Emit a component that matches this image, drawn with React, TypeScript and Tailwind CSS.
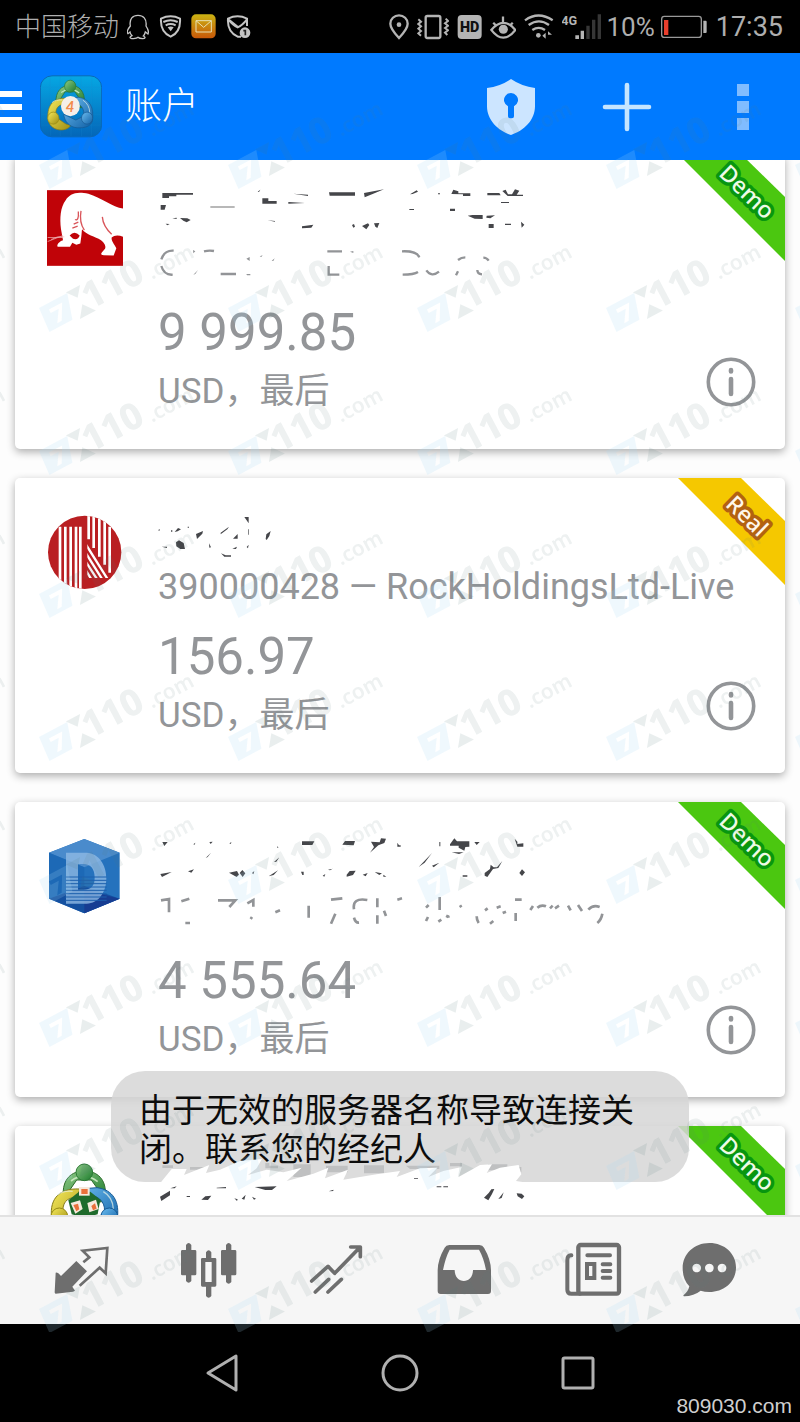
import React from "react";

type Kind = "Demo" | "Real";

function FourPeople({ four }: { four?: boolean }) {
  return (
    <g strokeWidth="3">
      <defs>
        <linearGradient id="mtGreen" x1="0" y1="0" x2="1" y2="1">
          <stop offset="0" stopColor="#8fca86" />
          <stop offset="1" stopColor="#1b7a2c" />
        </linearGradient>
        <linearGradient id="mtYellow" x1="0" y1="0" x2="1" y2="1">
          <stop offset="0" stopColor="#f6ea5c" />
          <stop offset="1" stopColor="#9d8c10" />
        </linearGradient>
        <linearGradient id="mtBlue" x1="0" y1="0" x2="1" y2="1">
          <stop offset="0" stopColor="#6dbdf0" />
          <stop offset="1" stopColor="#0f5fa5" />
        </linearGradient>
      </defs>
      <path d="M190 375C186 325 214 300 253 300s67 25 63 75c-4 20-18 22-28 12l6-32-20-28h-44l-22 32Z" fill="url(#mtGreen)" stroke="#2c6b2a" />
      <path d="M213 330Q253 300 293 332" fill="none" stroke="#c5e6bd" strokeWidth="5" />
      <path d="M156 448C146 392 170 350 240 354l-10 26c-30-2-46 16-40 52l34 22c14 10 24 12 36 6-18 36-90 34-104-12Z" fill="url(#mtYellow)" stroke="#857a1b" />
      <path d="M351 448c10-56-12-92-60-98l-26 2 0 20c38 2 54 30 47 56l-34 16-54-24c4 30 26 54 60 56 34 2 60-6 67-28Z" fill="url(#mtBlue)" stroke="#165993" />
      <path d="M172 372Q188 358 218 361M310 362q28 16 30 52" fill="none" stroke="#e8f3e8" strokeWidth="4" opacity=".7" />
      <circle cx="253" cy="304" r="25" fill="url(#mtGreen)" stroke="#2c7a35" />
      <circle cx="178" cy="436" r="25" fill="url(#mtYellow)" stroke="#968913" />
      <circle cx="328" cy="436" r="25" fill="url(#mtBlue)" stroke="#165993" />
      {four ? (
        <>
          <circle cx="254" cy="386" r="42" fill="#f5efe9" stroke="none" />
          <text x="252" y="410" textAnchor="middle" fontFamily="Lato, sans-serif" fontStyle="italic" fontWeight="700" fontSize="66" fill="#f28a4c">4</text>
        </>
      ) : (
        <>
          <path d="M205 388l32-26h34l30 24-8 44-40 10-38-10Z" fill="#1f6b2c" stroke="none" />
          <rect x="237" y="348" width="32" height="26" fill="#f6e9dc" stroke="none" />
          <path d="M212 396l28-8 8 26-22 14ZM262 396l26-10 8 28-28 10Z" fill="#f6e9dc" stroke="none" />
          <path d="M244 354h19v15h-19ZM220 402l14-4 4 17-9 6ZM274 405l11-8 5 16-11 5Z" fill="#e9703b" stroke="none" />
        </>
      )}
    </g>
  );
}

function AppIcon() {
  return (
    <svg className="h-[63px] w-[62px] shrink-0" viewBox="118 226 190 190" role="img" aria-label="MetaTrader 4">
      <defs>
        <linearGradient id="tile" x1="0" y1="0" x2="0" y2="1">
          <stop offset="0" stopColor="#06a7e3" />
          <stop offset="1" stopColor="#0466b8" />
        </linearGradient>
      </defs>
      <rect x="119" y="227" width="188" height="187" rx="36" fill="url(#tile)" stroke="#0a67b5" strokeWidth="3" />
      <path d="M150 232v178M180 230v182M213 230v182M245 230v182M276 232v178M122 262h182M122 295h182M122 345h182M122 378h182" stroke="#1f8fd5" strokeWidth="1" opacity=".5" />
      <g transform="translate(36 34) scale(.69 .74)">
        <FourPeople four />
      </g>
    </svg>
  );
}

function BearLogo() {
  return (
    <svg className="h-full w-full" viewBox="138 88 228 227">
      <rect x="138" y="88" width="228" height="227" fill="#c00308" />
      <path d="M366 143C335 140 300 110 262 99C225 90 205 100 194 118C178 140 176 170 180 205L186 238C174 242 166 252 170 258L207 258L214 246L226 252L238 248L241 226L243 205C256 222 282 226 300 238C310 246 316 256 312 264L303 274C298 280 302 283 308 283L338 284L346 262C340 250 330 240 332 230C340 222 354 222 366 228Z" fill="#fff" />
      <path d="M206 224q14-16 30 0-4 14-20 10Z" fill="#c00308" />
      <path d="M240 150q-6 34 10 58M232 152q2 30-10 24M304 168q2 28 28 52M218 190l14-6M214 202l16-6" fill="none" stroke="#d9555a" strokeWidth="4" />
      <path d="M140 230h46M140 242l46-18M150 236q20-12 40-8" fill="none" stroke="#f2b9bb" strokeWidth="2" />
    </svg>
  );
}

function RockLogo() {
  return (
    <svg className="h-full w-full" viewBox="141 128 228 228">
      <defs>
        <clipPath id="disc"><circle cx="254" cy="243" r="110" /></clipPath>
        <clipPath id="diag"><path d="M262 200h90v120h-90Z" /></clipPath>
      </defs>
      <g clipPath="url(#disc)">
        <rect x="141" y="128" width="228" height="228" fill="#b91f22" />
        <path d="M180 166v200M196 166v200M212 166v200M228 166v200M241 166v200" stroke="#fff" strokeWidth="8" />
        <path d="M266 130v74M281 130v100M298 130v126M314 130v150M329 166v138" stroke="#fff" strokeWidth="8" />
        <path d="M258 220l64 102M258 246l50 80M258 272l36 56M258 298l20 32" stroke="#fff" strokeWidth="7" clipPath="url(#diag)" />
      </g>
    </svg>
  );
}

function HexLogo() {
  return (
    <svg className="h-full w-full" viewBox="141 141 228 228">
      <path d="M253 144l106 41v138l-106 44-106-44V185Z" fill="#2572bd" />
      <path d="M253 144l106 41-106 44-106-44Z" fill="#4a8bcc" />
      <path d="M147 185l106 44v70l-106 24Z" fill="#1d69b6" />
      <path d="M147 323l106-38 106 38-106 44Z" fill="#1450a0" />
      <path d="M253 367v-70l106 26Z" fill="#173d92" />
      <path fillRule="evenodd" d="M198 185h62c36 2 59 36 59 77s-23 76-59 76h-62Zm36 34v77h16c22 0 34-10 34-36s-12-41-34-41Z" fill="#8fb9e3" opacity=".8" />
      <path d="M196 258h124M196 268h124M196 278h124M196 288h124M196 298h124M196 308h124M196 318h124M196 328h124" stroke="#1d60ae" strokeWidth="3" />
    </svg>
  );
}

function MetaLogo() {
  return (
    <svg className="h-full w-full" viewBox="141 273 228 228"><FourPeople /></svg>
  );
}

const DARK = "#45464a";
const GRAY = "#929497";

function MarksOne() {
  return (
    <svg className="h-[104px] w-[460px] max-w-full" viewBox="474 75 1380 312" preserveAspectRatio="xMinYMin slice" aria-hidden="true">
      <path fill={DARK} d="M487 99h92v5h-50v5h-22v5h-20ZM482 135h16l-4 14h-12ZM497 191l12 1-7 4ZM517 175l13-2v4ZM540 174l22 1 10 5-12 7-10-5ZM773 95l8-6-4 7ZM787 115h18v8h25v8h-43ZM880 101l44 3v4ZM865 126l50 3-50 2ZM987 97h78v10h-76ZM1092 99l60-11-36 15-22 9ZM906 199l34-5-6 9-28 2ZM1056 195l6-3 3 8-5 3ZM1086 198l18-8 4 5-9 13ZM1122 190l16-1-6 15-6-4ZM803 181l22 2v2Z" />
      <path fill={DARK} d="M1230 103l20-12 4 4-16 7ZM1354 102l6-13 15 5v6h36v8h-22v-5ZM1462 99h36l4 7h-40ZM1507 93l10-4 7 14h12l9-15 13 4-8 12h19v4h-46ZM1503 126h24v3h-24ZM1228 147h14v3h-14ZM1350 146h15v7h-15ZM1403 167l14-2h31v12l-24-1ZM1460 167l25-1-14 9-12-2ZM1466 192h15v12h-15ZM1515 191h18v4h-18ZM1563 185l10 9-8 9ZM1314 100h6v3h-6Z" />
      <path stroke="#aaa" strokeWidth="5" d="M631 141h73" />
      <path fill="none" stroke={GRAY} strokeWidth="7" d="M521 272q-28-2-37 26M484 318q8 28 34 26M612 274q16-4 30-1M662 342h46M982 274h44M986 318v26h32M1206 274q44-2 52 18M1208 344q34 0 46-8M1279 331q16 22 38 4M1374 300q10-8 22-8M1368 346l6-12M1450 293q10 0 16 9M1432 330q0 12 14 13" />
      <path fill={GRAY} d="M579 270l7 4-6 6ZM739 296l10-5v12ZM779 289l9-3-4 5ZM815 302l9-7-4 8ZM739 342h12v4h-10ZM580 344l14-14-8 12ZM1050 275l10-2v6Z" />
    </svg>
  );
}

function MarksTwo() {
  return (
    <svg className="h-[52px] w-[460px] max-w-full" viewBox="474 117 1380 156" preserveAspectRatio="xMinYMin slice" aria-hidden="true">
      <path fill={DARK} d="M524 186l10-12 9 4-10 6ZM528 217l9-6 14 8 4 18h-14l-12-8ZM588 192l21-9-2 8-16 16ZM662 188l25-18-5 8-20 15ZM699 206l14-14v14ZM733 141h13v19ZM797 207l2-14 13-10-4 15-8 12ZM627 220l6 12-5 1ZM663 250l14 6h16v4h-20ZM697 236l14-6-3 7ZM740 231l6-7-2 11ZM474 181l5-4v5ZM485 230h16v4ZM513 181h4v4h-4ZM563 170h4v3h-4ZM744 178h2v16h-2Z" />
    </svg>
  );
}

function MarksThree() {
  return (
    <svg className="h-[104px] w-[460px] max-w-full" viewBox="474 126 1380 312" preserveAspectRatio="xMinYMin slice" aria-hidden="true">
      <path fill={DARK} d="M487 153h16l-10 12ZM481 249l34-6-29 15ZM564 241l18-6-8 10ZM580 160l6-5-2 6ZM628 153l10-1-6 7ZM688 158l6-6-1 6ZM617 201l16-16-10 13ZM687 245l24-5 6 11-7 7ZM719 246l8-9 9 10-8 11ZM756 246l7-6-3 10ZM806 256l28-18-13 14ZM822 213l16-14-9 13ZM833 164l2 7h-3ZM906 151h37l-6 11h-31ZM1027 161l8-11h30l-4 13ZM1113 152l26 2 4-12 15 1-5 13-18 7-25 22 12-17ZM903 242h8v10h-4ZM968 254l8-5-3 8ZM984 236l14-3-8 5ZM1040 251l9-11 18-1-8 13-19 5ZM1088 251l15-5-6 10ZM1124 243l22 4-8 5ZM1150 251l9 6h-9ZM1192 155l5 8h5v4h-10Z" />
      <path fill={DARK} d="M1256 228l40-42-22 29ZM1296 224l22-9-17 14ZM1318 153h3v13h-3ZM1350 160l13-18 8 9h37v16l-12 1-3 11-17-9v-6h-26ZM1423 153h16l-9 9ZM1355 184h36l-14 5ZM1454 246l16-12 2-13 9 8h10l16-19-12 21-16 3-17 24-8-4ZM1544 143l8 9v7l18-2v10h-18ZM1558 246l8-11 9 9-9 11ZM1388 253h14v4h-14Z" />
      <path fill="none" stroke={GRAY} strokeWidth="8" d="M483 328l24-4v40M544 331l24-8M654 328h52l-18 20M742 337l18-10v20M826 364l14-6M926 344v36M993 326l34-4M993 398l13-30M1102 327q-46-8-40 28M1062 380q4 16 15 15M1132 322v27M1132 373v25M1152 359l6 16M1192 326l14-4M1278 350l8-8M1278 390l6-12M1319 318v39M1315 392l9-6M1340 380l4-8" />
      <path fill="none" stroke={GRAY} strokeWidth="8" d="M1345 380v-6M1380 343l4 6M1430 376q0 12 6 20M1455 358l8-6M1470 398l10-8M1490 350l12-4M1508 366l10-4M1545 326h20M1547 366v24M1591 357l8-12M1612 350q12-10 26-4M1650 352l8-8M1665 352l12-8M1704 344l8 14M1734 342l12 18M1765 356q14-16 34-8M1792 396q12-10 15-28M556 396h14M752 384l4-6" />
    </svg>
  );
}

function MarksFour() {
  return (
    <svg className="relative z-20 h-[104px] w-[460px] max-w-full" viewBox="474 258 1380 312" preserveAspectRatio="xMinYMin slice" aria-hidden="true">
      <path fill="#bfc0c1" d="M487 283h32v8h-32ZM570 288h50v8h-50ZM796 276h12v8h26v8h-38ZM880 280h52v38h-52ZM978 284h65v20h-65ZM1092 283h60v24h-60ZM1218 284h100v10h-88ZM1350 276h36v10h-36ZM1464 280h58v18h-58ZM1546 288h18v16h-18Z" />
      <path fill="#fff" d="M484 332L515 294L560 294L552 312L628 282L618 306L660 296L720 270L786 264L770 292L744 312L800 296L850 304L905 290L860 330L940 308L985 290L975 322L1044 296L1030 326L1130 310L1200 300L1190 318L1260 292L1312 290L1285 318L1330 300L1385 288L1376 318L1440 282L1476 280L1460 306L1500 290L1556 282L1564 310L1548 330L1572 334L1574 390H484Z" />
      <path fill={DARK} d="M480 377l30-18v14l-26 17ZM511 352l19-6-6 6ZM604 386l12-10 18-2-10 13ZM650 350l28-2v4h-28ZM764 348l66-2-14 11h-20ZM703 382l10 3-2 5ZM725 383l12-12-4 15ZM756 377l12 6-6 3ZM986 361l14-5v4ZM560 375h10v3h-10ZM1452 380l14-14 8-11 9-1-7 15-11 19ZM1495 384l16-20-6 17ZM1550 367l15 1 8 8-7 8-13-8ZM1310 346h14v3h-14ZM1330 346h14v3h-14ZM1242 322h12v2h-12Z" />
    </svg>
  );
}

function Ribbon({ kind }: { kind: Kind }) {
  const demo = kind === "Demo";
  return (
    <svg className="absolute right-0 top-0 h-[107px] w-[107px]" viewBox="0 0 107 107" role="img" aria-label={kind}>
      <path d="M0 0h63l44 43v64Z" fill={demo ? "#4bc710" : "#f5c800"} />
      <text
        x="69" y="46" transform="rotate(44 69 38)" textAnchor="middle" fontFamily="'Noto Sans', sans-serif" fontWeight="500"
        fontSize="23" fill={demo ? "#eefbe6" : "#fff7ea"} stroke={demo ? "#08960f" : "#b36210"} strokeWidth="7"
        strokeLinejoin="round" paintOrder="stroke"
      >{kind}</text>
    </svg>
  );
}

function InfoIcon() {
  return (
    <svg className="h-[50px] w-[50px]" viewBox="0 0 50 50" fill="none" stroke="#939598" strokeLinecap="round" aria-hidden="true">
      <circle cx="25" cy="25" r="22.7" strokeWidth="3.6" />
      <path d="M25 13v1.5M25 22v15" strokeWidth="4.6" />
    </svg>
  );
}

type CardProps = { logo: React.ReactNode; marks: React.ReactNode; account?: string; balance?: string; kind: Kind };

function AccountCard({ logo, marks, account, balance, kind }: CardProps) {
  return (
    <article className="relative flex shrink-0 rounded-[5px] bg-white pb-[34px] pl-8 pt-[31px] text-[#939598] shadow-[0_3px_8px_rgba(0,0,0,0.32)]">
      <div className="mr-[35px] mt-[5px] h-[76px] w-[76px] shrink-0">{logo}</div>
      <div className="min-w-0 flex-1">
        <div className="h-[104px]">
          <div className={account ? "h-[52px]" : "h-[104px]"}>{marks}</div>
          {account && <p className="whitespace-nowrap text-[36px] leading-[52px]">{account}</p>}
        </div>
        {balance && (
          <div className="mt-2 flex items-end justify-between pr-[29px]">
            <div>
              <p className="text-[51px] leading-[72px]">{balance}</p>
              <p className="text-[35px] leading-[46px]">USD，最后</p>
            </div>
            <button type="button" aria-label="账户信息" className="mb-2"><InfoIcon /></button>
          </div>
        )}
      </div>
      <Ribbon kind={kind} />
    </article>
  );
}

function StatusBar() {
  return (
    <div className="flex h-[53px] shrink-0 items-center justify-between bg-black pl-[15px] pr-[17px] text-[#aeaeae]">
      <div className="flex items-center gap-2">
        <span className="whitespace-nowrap text-[26px] font-light leading-8">中国移动</span>
        <svg className="h-[26px] w-[22px]" viewBox="376 42 66 78" fill="none" stroke="#c4c4c4" strokeWidth="4" aria-hidden="true">
          <path d="M386 78C382 56 394 46 409 46s27 10 24 32c8 12 8 20 6 24l-8-6q-2 8-6 12c8 4 6 8-2 8s-12-2-14-4c-4 4-24 6-24 0 0-2 4-4 6-5q-5-5-6-11l-6 5c-4-4-2-12 7-23Z" />
        </svg>
        <svg className="ml-0.5 h-[26px] w-[24px]" viewBox="475 42 72 78" fill="none" stroke="#c4c4c4" strokeWidth="6" aria-hidden="true">
          <path d="M481 56q29-14 57 0c2 28-10 46-28 54-18-8-31-26-29-54Z" />
          <path d="M488 66q22-10 43 0M495 76q15-8 30 0" />
          <path d="M501 82q9-5 18 0l-9 12Z" fill="#c4c4c4" stroke="none" />
        </svg>
        <svg className="h-[25px] w-[25px]" viewBox="572 44 75 75" aria-hidden="true">
          <defs><linearGradient id="mail" x1="0" y1="0" x2="0" y2="1"><stop stopColor="#cbb313" /><stop offset="1" stopColor="#c85809" /></linearGradient></defs>
          <rect x="573" y="45" width="73" height="72" rx="14" fill="url(#mail)" />
          <path d="M587 64h46v34h-46ZM587 64l23 20 23-20" fill="none" stroke="#e8e0b4" strokeWidth="3" />
        </svg>
        <svg className="ml-0.5 h-[26px] w-[26px]" viewBox="676 42 76 78" fill="none" stroke="#c4c4c4" strokeWidth="6" aria-hidden="true">
          <path d="M720 110h-10c-18-8-31-26-29-54q29-14 57 0v22M682 58q14 18 28 24 14-6 28-24M682 58l28 22" />
          <circle cx="732" cy="98" r="16" fill="#c4c4c4" stroke="none" />
          <path d="M727 92h6v14" stroke="#222" strokeWidth="5" />
        </svg>
      </div>
      <div className="flex items-center gap-2 leading-8">
        <svg className="h-[26px] w-5" viewBox="37 42 60 78" fill="none" stroke="#b4b4b4" strokeWidth="7" aria-hidden="true">
          <path d="M67 114Q41 86 41 71a26 25 0 0 1 52 0q0 15-26 43Z" /><circle cx="67" cy="74" r="7" fill="#b4b4b4" stroke="none" />
        </svg>
        <svg className="h-[26px] w-8" viewBox="121 42 96 78" fill="none" stroke="#b4b4b4" strokeWidth="7" aria-hidden="true">
          <rect x="147" y="48" width="44" height="66" rx="5" />
          <path d="M125 58l8 7-8 7 8 7-8 7 8 7-8 7 8 7M207 56l7 7-9 7 9 7-9 7 9 7-9 7 7 7" strokeWidth="6" />
        </svg>
        <svg className="h-[26px] w-[25px]" viewBox="241 42 75 78" aria-hidden="true">
          <rect x="243" y="45" width="72" height="72" rx="12" fill="#b4b4b4" />
          <text x="279" y="96" textAnchor="middle" fontFamily="Roboto, sans-serif" fontWeight="900" fontSize="43" fill="#111">HD</text>
        </svg>
        <svg className="h-[26px] w-[26px]" viewBox="341 42 80 78" fill="none" stroke="#b4b4b4" strokeWidth="7" aria-hidden="true">
          <path d="M345 90q18-22 37-22t37 22q-18 24-37 24t-37-24ZM351 68l10 10M381 49v18M411 68l-10 10" /><circle cx="382" cy="88" r="14" fill="#b4b4b4" stroke="none" />
        </svg>
        <svg className="h-[26px] w-[30px]" viewBox="443 42 90 78" fill="none" stroke="#b4b4b4" strokeWidth="7" aria-hidden="true">
          <path d="M446 61q40-29 83 0M457 75q31-22 61 0M468 90q19-13 38 0" /><circle cx="486" cy="106" r="7" fill="#b4b4b4" stroke="none" />
          <path d="M508 98v18l-10-9ZM515 94l12 10h-12v12" fill="#b4b4b4" stroke="none" />
        </svg>
        <svg className="h-[28px] w-[40px]" viewBox="552 38 120 84" aria-hidden="true">
          <text x="550" y="74" fontFamily="Roboto, sans-serif" fontWeight="700" fontSize="38" fill="#b4b4b4">4G</text>
          <path d="M592 105h11v11h-11ZM608 91h10v25h-10Z" fill="#b4b4b4" />
          <path d="M625 76h10v40h-10ZM642 58h10v58h-10ZM659 42h10v74h-10Z" fill="#363636" />
        </svg>
        <span className="-ml-1 text-[26px]">10%</span>
        <svg className="-ml-0.5 h-[24px] w-[47px]" viewBox="849 42 141 72" aria-hidden="true">
          <rect x="851" y="46" width="119" height="63" rx="8" fill="none" stroke="#999" strokeWidth="4" />
          <path d="M858 57h13v45h-13Z" fill="#e93e2c" /><path d="M976 59h7q3 0 3 4v29q0 4-3 4h-7Z" fill="#b4b4b4" />
        </svg>
        <time className="text-[27px]">17:35</time>
      </div>
    </div>
  );
}

function Header() {
  return (
    <header className="flex h-[107px] shrink-0 items-center bg-[#007aff] pr-[51px]">
      <button type="button" aria-label="菜单" className="mr-[18px] flex w-[22px] flex-col gap-[7px]">
        <span className="h-1.5 w-full bg-white" />
        <span className="h-1.5 w-full bg-white" />
        <span className="h-1.5 w-full bg-white" />
      </button>
      <AppIcon />
      <h1 className="ml-[23px] flex-1 text-[37px] font-light leading-[44px] text-white">账户</h1>
      <button type="button" aria-label="安全" className="mr-[67px]">
        <svg className="h-[56px] w-12" viewBox="321 235 144 168" fill="#cce5ff">
          <path fillRule="evenodd" d="M393 235q32 22 72 27v55c0 42-34 74-72 86-38-12-72-44-72-86v-55q40-5 72-27Zm-9 82v30q0 6 6 6h6q6 0 6-6v-30a21 21 0 1 0-18 0Z" />
        </svg>
      </button>
      <button type="button" aria-label="添加账户" className="mr-[85px]">
        <svg className="h-[50px] w-[50px]" viewBox="0 0 50 50" stroke="#c5e5ff" strokeWidth="4.6" strokeLinecap="round"><path d="M25 3v44M3 25h44" /></svg>
      </button>
      <button type="button" aria-label="更多" className="flex w-[12px] flex-col gap-[5px]">
        <span className="h-3 w-full bg-[#80bcff]" />
        <span className="h-3 w-full bg-[#80bcff]" />
        <span className="h-3 w-full bg-[#80bcff]" />
      </button>
    </header>
  );
}

const TAB = "h-[58px] w-[58px]";

function TabBar() {
  return (
    <nav className="flex h-[109px] shrink-0 items-center justify-between border-t-2 border-[#e2e2e2] bg-[#f6f6f6] pb-0.5 pl-[52px] pr-[62px] text-[#6e6e6e]">
      <button type="button" aria-label="交易">
        <svg className={TAB} viewBox="156 510 174 174" fill="currentColor">
          <path d="M229 570l32 31-44 46 8 12-6 3-52 6q-3 0-3-4l3-59q6-2 16 10Z" />
          <path d="M250 574l18-15-20-20 74-8-5 76-18-17-60 54" fill="none" stroke="currentColor" strokeWidth="8" />
        </svg>
      </button>
      <button type="button" aria-label="图表">
        <svg className={TAB} viewBox="540 510 174 174" fill="currentColor">
          <path d="M558 522q8-12 16 0v15h11q4 0 4 4v68q0 4-4 4h-11v17q-8 10-16 0v-17h-11q-4 0-4-4v-68q0-4 4-4h11ZM678 522q8-12 16 0v15h11q4 0 4 4v68q0 4-4 4h-11v20q-8 10-16 0v-20h-11q-4 0-4-4v-68q0-4 4-4h11Z" />
          <path fillRule="evenodd" d="M618 544q8-12 16 0v17h11q4 0 4 4v78q0 4-4 4h-11v28q-8 10-16 0v-28h-11q-4 0-4-4v-78q0-4 4-4h11Zm-2 29v60h19v-60Z" />
        </svg>
      </button>
      <button type="button" aria-label="趋势">
        <svg className={TAB} viewBox="924 510 174 174" fill="none" stroke="currentColor" strokeWidth="11" strokeLinecap="round" strokeLinejoin="round">
          <path d="M935 630l49-44 20 21 76-78M1052 528h29v29M946 663l40-38M984 663l40-38" />
        </svg>
      </button>
      <button type="button" aria-label="邮箱">
        <svg className={TAB} viewBox="108 90 174 174" fill="currentColor">
          <path fillRule="evenodd" d="M148 102h90q10 0 14 8 21 36 21 68v62q0 9-9 9H122q-9 0-9-9v-62q0-32 21-68 4-8 14-8Zm1 14q-12 22-20 61h35c0 44 55 44 55 0h39q-7-37-21-61Z" />
        </svg>
      </button>
      <button type="button" aria-label="新闻">
        <svg className={TAB} viewBox="492 90 174 174" fill="none" stroke="currentColor" strokeLinecap="round">
          <rect x="535" y="102" width="122" height="146" rx="7" strokeWidth="13" />
          <path d="M514 133q-12-1-12 14v89q0 12 12 12h26" strokeWidth="12" />
          <path d="M562 133h68M608 160h23M608 180h23M608 200h23" strokeWidth="12" />
          <rect x="561" y="159" width="22" height="42" strokeWidth="12" />
        </svg>
      </button>
      <button type="button" aria-label="聊天" className="-ml-3">
        <svg className={TAB} viewBox="840 90 174 174" fill="currentColor">
          <path fillRule="evenodd" d="M928 96c46 0 80 32 80 73 0 44-36 74-80 74q-14 0-26-4-20 16-50 17-4-2 0-5 12-8 16-25-20-20-20-55c0-42 34-75 80-75Zm-38 62a13 13 0 1 0 .1 0Zm38 0a13 13 0 1 0 .1 0Zm38 0a13 13 0 1 0 .1 0Z" />
        </svg>
      </button>
    </nav>
  );
}

function SystemNav() {
  return (
    <nav className="flex h-[98px] shrink-0 items-center justify-center gap-[138px] bg-black text-[#b0b0b0]">
      <button type="button" aria-label="返回">
        <svg className="h-10 w-10" viewBox="0 0 40 40" fill="none" stroke="currentColor" strokeWidth="3" strokeLinejoin="round"><path d="M34 3v34L6 20Z" /></svg>
      </button>
      <button type="button" aria-label="主屏幕">
        <svg className="h-10 w-10" viewBox="0 0 40 40" fill="none" stroke="currentColor" strokeWidth="3"><circle cx="20" cy="20" r="17" /></svg>
      </button>
      <button type="button" aria-label="最近任务">
        <svg className="h-10 w-10" viewBox="0 0 40 40" fill="none" stroke="currentColor" strokeWidth="3"><rect x="5" y="5" width="30" height="30" rx="1.5" /></svg>
      </button>
    </nav>
  );
}

function Watermark() {
  return (
    <svg className="pointer-events-none absolute inset-x-0 bottom-[90px] top-[53px] z-30 h-[calc(100%-143px)] w-full" aria-hidden="true">
      <defs>
        <pattern id="wm" x="30" y="37" width="189" height="143" patternUnits="userSpaceOnUse">
          <g transform="translate(9 75) rotate(-28)">
            <path fillRule="evenodd" d="M0 0h32l-8 26H-2ZM8 6v4h9l-8 12h5l9-16Z" fill="#a5d8f2" opacity=".18" />
            <path d="M31 -1h16L39 9ZM31 29h18L40 17Z" fill="#4f7272" opacity=".12" />
            <g fontFamily="'Noto Sans', sans-serif" fill="#4f7272" opacity=".1">
              <text x="44" y="26" fontWeight="800" fontSize="37">110</text>
              <text x="113" y="28" fontWeight="600" fontSize="21">.com</text>
            </g>
          </g>
        </pattern>
      </defs>
      <rect width="100%" height="100%" fill="url(#wm)" />
    </svg>
  );
}

export default function App() {
  return (
    <div className="relative flex h-screen flex-col overflow-hidden bg-[#fdfdfd] font-['Roboto','Noto_Sans_CJK_SC',sans-serif]">
      <StatusBar />
      <Header />
      <main className="min-h-0 flex-1 overflow-y-auto px-[15px] [scrollbar-width:none]">
        <div className="-mt-1.5 flex flex-col gap-[29px]">
          <AccountCard logo={<BearLogo />} marks={<MarksOne />} balance="9 999.85" kind="Demo" />
          <AccountCard logo={<RockLogo />} marks={<MarksTwo />} account="390000428 — RockHoldingsLtd-Live" balance="156.97" kind="Real" />
          <AccountCard logo={<HexLogo />} marks={<MarksThree />} balance="4 555.64" kind="Demo" />
          <AccountCard logo={<MetaLogo />} marks={<MarksFour />} kind="Demo" />
        </div>
      </main>
      <TabBar />
      <SystemNav />
      <div role="status" className="absolute bottom-[240px] left-1/2 z-10 w-[578px] max-w-full -translate-x-1/2 rounded-[34px] bg-[#d6d6d6]/85 px-7 pb-[13px] pt-5 text-[33px] leading-[39px] text-[#0c0c0c]">
        由于无效的服务器名称导致连接关闭。联系您的经纪人
      </div>
      <Watermark />
      <span className="absolute bottom-1 right-2 z-30 font-['Liberation_Sans',sans-serif] text-[21px] leading-6 text-[#cfcfcf]">809030.com</span>
    </div>
  );
}
